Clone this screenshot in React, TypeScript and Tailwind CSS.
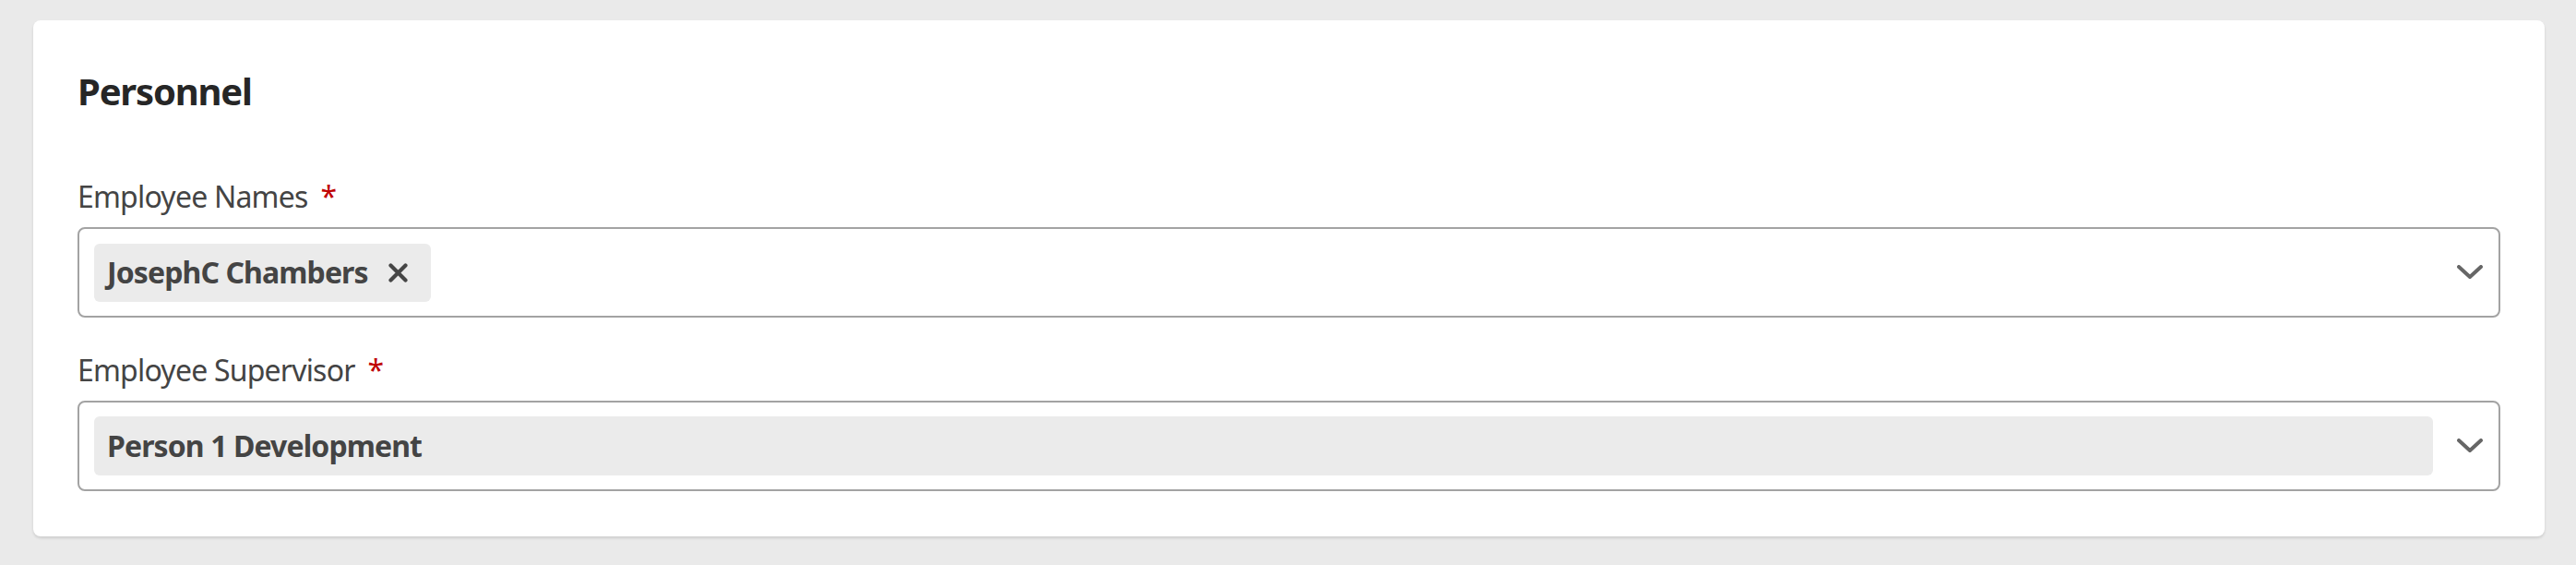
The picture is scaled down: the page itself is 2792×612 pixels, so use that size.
import React from 'react';

// chevron for the select controls
function Chevron() {
  return (
    <svg width="28" height="16" viewBox="0 0 28 16" fill="none">
      <path d="M2 2L14 13L26 2" stroke="#666666" strokeWidth="4" strokeLinecap="round" strokeLinejoin="round" />
    </svg>
  );
}

function CloseIcon() {
  return (
    <svg width="21" height="21" viewBox="0 0 21 21" fill="none">
      <path d="M2.5 2.5L18.5 18.5M18.5 2.5L2.5 18.5" stroke="#454545" strokeWidth="4.2" strokeLinecap="round" />
    </svg>
  );
}

function FieldLabel({ children }: { children: React.ReactNode }) {
  return (
    <div className="text-[32px] leading-[40px] tracking-[-0.8px] text-[#444444]">
      {children}
      <span className="ml-[14px] text-[#c00000]">*</span>
    </div>
  );
}

export default function App() {
  return (
    <div
      className="min-h-[612px] bg-[#eaeaea] pt-[22px] pl-[36px] pr-[34px] pb-[30px]"
      style={{ fontFamily: '"Noto Sans", "Open Sans", sans-serif' }}
    >
      <div className="rounded-[8px] bg-white px-[48px] pt-[53px] pb-[49px] shadow-[0_2px_3px_rgba(0,0,0,0.12)]">
        <h2 className="text-[40px] font-bold leading-[48px] tracking-[-1.2px] text-[#262626]">Personnel</h2>

        <div className="mt-[70px]">
          <FieldLabel>Employee Names</FieldLabel>
          <div className="mt-[13px] flex h-[98px] items-center rounded-[8px] border-2 border-[#a3a3a3] bg-white">
            <div className="flex flex-1 items-center pl-4">
              <div className="flex h-[63px] items-center rounded-[6px] bg-[#ebebeb] pl-[14px] pr-[25px]">
                <span className="text-[32px] font-bold tracking-[-0.9px] text-[#444444]">JosephC Chambers</span>
                <span className="ml-[22px] flex items-center">
                  <CloseIcon />
                </span>
              </div>
            </div>
            <div className="flex items-center pl-[26px] pr-[17px]">
              <Chevron />
            </div>
          </div>
        </div>

        <div className="mt-[37px]">
          <FieldLabel>Employee Supervisor</FieldLabel>
          <div className="mt-[13px] flex h-[98px] items-center rounded-[8px] border-2 border-[#a3a3a3] bg-white">
            <div className="flex flex-1 items-center pl-4">
              <div className="flex h-[64px] flex-1 items-center rounded-[6px] bg-[#ebebeb] pl-[14px]">
                <span className="text-[32px] font-bold tracking-[-0.9px] text-[#444444]">Person 1 Development</span>
              </div>
            </div>
            <div className="flex items-center pl-[26px] pr-[17px]">
              <Chevron />
            </div>
          </div>
        </div>
      </div>
    </div>
  );
}
